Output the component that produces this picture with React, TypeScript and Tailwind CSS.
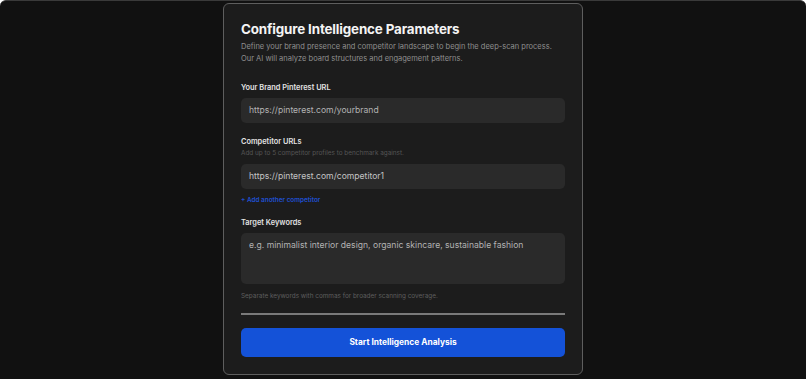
import React from 'react';

const fieldBox =
  'w-full rounded-[5px] bg-[#2a2a2a] px-[8px] text-[8.6px] text-[#b3b3b3] outline-none';

export default function App() {
  return (
    <div className="flex h-[379px] w-[806px] justify-center overflow-hidden rounded-t-[6px] border-t border-[#3a3a3a] bg-[#111111] pt-[2px] font-['Inter','Noto_Sans',sans-serif]">
      <div className="flex h-[372px] w-[360px] flex-col rounded-[6px] border border-[#5e5e5e] bg-[#1c1c1c] px-[17px] pt-[15px]">
        <h1 className="text-[13.4px] font-bold leading-[20px] tracking-[-0.15px] text-[#f4f4f4]">
          Configure Intelligence Parameters
        </h1>
        <p className="mt-[2px] text-[7.5px] leading-[12px] text-[#8f8f8f]">
          Define your brand presence and competitor landscape to begin the deep-scan process.
          <br />
          Our AI will analyze board structures and engagement patterns.
        </p>

        <label className="mt-[17px] text-[7.4px] font-semibold leading-[12px] text-[#e2e2e2]">
          Your Brand Pinterest URL
        </label>
        <div className={`${fieldBox} mt-[4px] flex h-[25px] items-center`}>
          https://pinterest.com/yourbrand
        </div>

        <label className="mt-[13px] text-[7.4px] font-semibold leading-[12px] text-[#e2e2e2]">
          Competitor URLs
        </label>
        <p className="text-[6.4px] leading-[10px] text-[#555555]">
          Add up to 5 competitor profiles to benchmark against.
        </p>
        <div className={`${fieldBox} mt-[6px] flex h-[25px] items-center text-[#c4c4c4]`}>
          https://pinterest.com/competitor1
        </div>
        <button className="mt-[6px] self-start text-[6.4px] font-semibold leading-[10px] text-[#1f4fd0]">
          + Add another competitor
        </button>

        <label className="mt-[12px] text-[7.4px] font-semibold leading-[12px] text-[#e2e2e2]">
          Target Keywords
        </label>
        <div className={`${fieldBox} mt-[4px] h-[51px] pt-[6px] leading-[13px] text-[#9a9a9a]`}>
          e.g. minimalist interior design, organic skincare, sustainable fashion
        </div>
        <p className="mt-[7px] text-[6.4px] leading-[10px] text-[#5e5e5e]">
          Separate keywords with commas for broader scanning coverage.
        </p>

        <div className="mt-[12px] h-[1.5px] bg-[#7a7a7a]" />

        <button className="mt-[13px] h-[29px] w-full rounded-[5px] bg-[#1452d8] text-[8.4px] font-bold text-white">
          Start Intelligence Analysis
        </button>
      </div>
    </div>
  );
}
